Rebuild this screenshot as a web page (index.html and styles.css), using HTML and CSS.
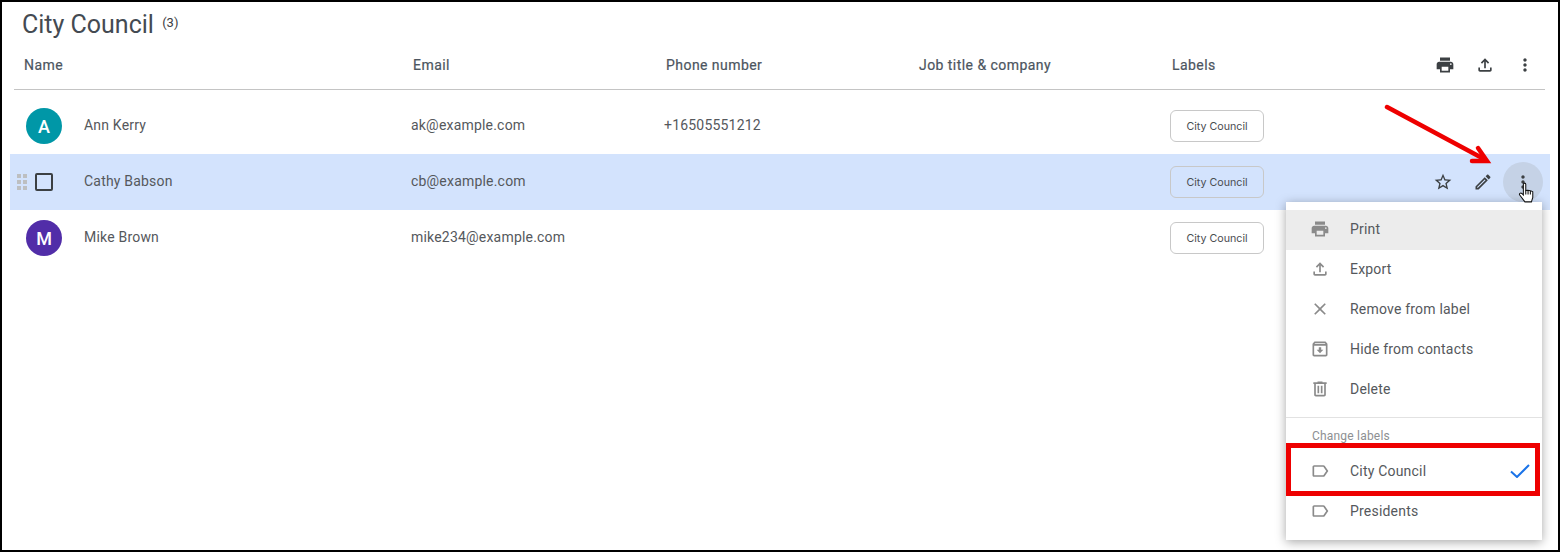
FILE: index.html
```html
<!DOCTYPE html>
<html lang="en">
<head>
<meta charset="utf-8">
<title>City Council</title>
<link rel="stylesheet" href="styles.css">
</head>
<body>
<svg class="defs" width="0" height="0" aria-hidden="true">
  <symbol id="i-print" viewBox="0 0 24 24"><path d="M19 8H5c-1.66 0-3 1.34-3 3v6h4v4h12v-4h4v-6c0-1.66-1.34-3-3-3zm-3 11H8v-5h8v5zm3-7c-.55 0-1-.45-1-1s.45-1 1-1 1 .45 1 1-.45 1-1 1zm-1-9H6v4h12V3z"/></symbol>
  <symbol id="i-export" viewBox="0 0 24 24"><path d="M18 15v3H6v-3H4v3c0 1.1.9 2 2 2h12c1.1 0 2-.9 2-2v-3h-2zM7 9l1.41 1.41L11 7.83V16h2V7.83l2.59 2.58L17 9l-5-5-5 5z"/></symbol>
  <symbol id="i-more" viewBox="0 0 24 24"><path d="M12 8c1.1 0 2-.9 2-2s-.9-2-2-2-2 .9-2 2 .9 2 2 2zm0 2c-1.1 0-2 .9-2 2s.9 2 2 2 2-.9 2-2-.9-2-2-2zm0 6c-1.1 0-2 .9-2 2s.9 2 2 2 2-.9 2-2-.9-2-2-2z"/></symbol>
  <symbol id="i-star" viewBox="0 0 24 24"><path d="M22 9.24l-7.19-.62L12 2 9.19 8.63 2 9.24l5.46 4.73L5.82 21 12 17.27 18.18 21l-1.63-7.03L22 9.24zM12 15.4l-3.76 2.27 1-4.28-3.32-2.88 4.38-.38L12 6.1l1.71 4.04 4.38.38-3.32 2.88 1 4.28L12 15.4z"/></symbol>
  <symbol id="i-edit" viewBox="0 0 24 24"><path d="M3 17.25V21h3.75L17.81 9.94l-3.75-3.75L3 17.25zM5.92 19H5v-.92l9.06-9.06.92.92L5.92 19zM20.71 5.630l-2.34-2.34c-.2-.2-.45-.29-.71-.29s-.51.1-.7.29l-1.83 1.83 3.75 3.75 1.83-1.83c.39-.39.39-1.02 0-1.41z"/></symbol>
  <symbol id="i-close" viewBox="0 0 24 24"><path d="M19 6.41L17.59 5 12 10.59 6.41 5 5 6.41 10.59 12 5 17.59 6.41 19 12 13.41 17.59 19 19 17.59 13.41 12z"/></symbol>
  <symbol id="i-hide" viewBox="0 0 24 24"><path d="M20.54 5.23l-1.39-1.68C18.88 3.21 18.47 3 18 3H6c-.47 0-.88.21-1.16.55L3.46 5.23C3.17 5.57 3 6.02 3 6.5V19c0 1.1.9 2 2 2h14c1.1 0 2-.9 2-2V6.5c0-.48-.17-.93-.46-1.27zM6.24 5h11.52l.83 1H5.42l.82-1zM5 19V8h14v11H5zm8.45-9h-2.9v3H8l4 4 4-4h-2.55z"/></symbol>
  <symbol id="i-delete" viewBox="0 0 24 24"><path d="M15 4V3H9v1H4v2h1v13c0 1.1.9 2 2 2h10c1.1 0 2-.9 2-2V6h1V4h-5zm2 15H7V6h10v13zM9 8h2v9H9zm4 0h2v9h-2z"/></symbol>
  <symbol id="i-label" viewBox="0 0 24 24"><path d="M17.63 5.84C17.27 5.33 16.67 5 16 5L5 5.01C3.9 5.01 3 5.9 3 7v10c0 1.1.9 1.99 2 1.99L16 19c.67 0 1.27-.33 1.63-.84L22 12l-4.37-6.16zM16 17H5V7h11l3.55 5L16 17z"/></symbol>
</svg>

<div class="frame">
  <h1 class="title">City Council <span class="count">(3)</span></h1>

  <div class="head">
    <span>Name</span>
    <span>Email</span>
    <span>Phone number</span>
    <span>Job title &amp; company</span>
    <span>Labels</span>
    <span class="head-actions">
      <svg class="ic dark"><use href="#i-print"/></svg>
      <svg class="ic dark"><use href="#i-export"/></svg>
      <svg class="ic dark"><use href="#i-more"/></svg>
    </span>
  </div>

  <div class="rows">
    <div class="row">
      <span class="lead"><span class="avatar teal">A</span></span>
      <span>Ann Kerry</span>
      <span>ak@example.com</span>
      <span class="phone">+16505551212</span>
      <span class="chip">City Council</span>
    </div>
    <div class="row active">
      <span class="lead">
        <span class="grip"><i></i><i></i><i></i><i></i><i></i><i></i></span>
        <span class="check"></span>
      </span>
      <span>Cathy Babson</span>
      <span>cb@example.com</span>
      <span></span>
      <span class="chip">City Council</span>
      <span class="row-actions">
        <span class="act"><svg class="ic dark"><use href="#i-star"/></svg></span>
        <span class="act"><svg class="ic dark"><use href="#i-edit"/></svg></span>
        <span class="act on"><svg class="ic dark"><use href="#i-more"/></svg></span>
      </span>
    </div>
    <div class="row">
      <span class="lead"><span class="avatar purple">M</span></span>
      <span>Mike Brown</span>
      <span>mike234@example.com</span>
      <span></span>
      <span class="chip">City Council</span>
    </div>
  </div>

  <div class="menu">
    <div class="item hl"><svg class="ic"><use href="#i-print"/></svg>Print</div>
    <div class="item"><svg class="ic"><use href="#i-export"/></svg>Export</div>
    <div class="item"><svg class="ic"><use href="#i-close"/></svg>Remove from label</div>
    <div class="item"><svg class="ic"><use href="#i-hide"/></svg>Hide from contacts</div>
    <div class="item"><svg class="ic"><use href="#i-delete"/></svg>Delete</div>
    <div class="rule"></div>
    <div class="menu-head">Change labels</div>
    <div class="item"><svg class="ic"><use href="#i-label"/></svg>City Council
      <svg class="tick" viewBox="0 0 20 14"><path d="M1 7.5l6 5.5L19 1"/></svg>
    </div>
    <div class="item"><svg class="ic"><use href="#i-label"/></svg>Presidents</div>
  </div>

  <div class="redbox"></div>

  <svg class="arrow" viewBox="0 0 120 72">
    <path d="M3 4L100 56"/>
    <path d="M88 58L103 58L94 45"/>
  </svg>

  <svg class="hand" viewBox="0 0 16 22">
    <path d="M5 2.200c0-1.500 2.300-1.500 2.300 0v6l1.500-.3 1.800.2 1.800.4 1.600.8v5.500l-1.300 4.200H6.500L1.500 12.500c-.8-1.300.8-2.500 2-1.500L5 12.500z"/>
    <path d="M7.300 8v4M9.500 8v4M11.700 8.500V12"/>
  </svg>
</div>
</body>
</html>
```
FILE: styles.css
```css
* { box-sizing: border-box; }
html, body { margin: 0; padding: 0; background: #fff; }
body { font-family: Roboto, "Liberation Sans", sans-serif; overflow: hidden; }
.defs { position: absolute; }

.frame {
  position: relative;
  width: 1560px;
  height: 552px;
  border: 2px solid #000;
  padding: 3px 8px 0;
  color: #4a4c50;
  overflow: hidden;
}

.title {
  margin: 0 0 0 12px;
  height: 36px;
  line-height: 35px;
  font-size: 25px;
  font-weight: 400;
  color: #444a52;
}
.count { font-size: 13px; margin-left: 2px; vertical-align: 6px; color: #3c4043; }

.head {
  display: grid;
  grid-template-columns: 389px 253px 253px 253px 1fr auto;
  align-items: center;
  height: 49px;
  margin: 0 5px 0 4px;
  padding: 0 0 0 10px;
  border-bottom: 1px solid #c4c4c4;
  font-size: 14px;
  letter-spacing: .45px;
  color: #4c5560;
}
.head > span { -webkit-text-stroke: .2px #4c5560; }
.head > .head-actions {
  display: flex;
  gap: 20px;
  padding-right: 10px;
  -webkit-text-stroke: 0;
}

.ic { width: 20px; height: 20px; fill: #8a8a8a; flex: none; display: block; }
.ic.dark { fill: #3c4043; }

.rows { margin-top: 8px; }
.row {
  display: grid;
  grid-template-columns: 74px 327px 252px 507px 253px 1fr;
  align-items: center;
  height: 56px;
  padding-bottom: 2px;
  font-size: 14px;
  letter-spacing: .2px;
  color: #55585c;
}
.row.active { background: #d3e3fd; }
.phone { margin-left: 1px; }
.lead { display: flex; align-items: center; height: 36px; margin-top: 2px; }
.avatar {
  width: 36px;
  height: 36px;
  margin-left: 16px;
  border-radius: 50%;
  color: #fff;
  font-size: 18px;
  font-weight: 500;
  letter-spacing: 0;
  display: flex;
  align-items: center;
  justify-content: center;
}
.teal { background: #0097a7; }
.purple { background: #512da8; }

.grip {
  display: grid;
  grid-template-columns: 4px 4px;
  grid-auto-rows: 4px;
  gap: 2px 2px;
  margin-left: 7px;
}
.grip i { background: #bdbfc1; display: block; }
.check {
  width: 18px;
  height: 18px;
  margin-left: 8px;
  border: 2px solid #3c4043;
  border-radius: 2px;
}

.chip {
  width: 94px;
  height: 32px;
  margin-top: 2px;
  border: 1px solid #c8c8c8;
  border-radius: 6px;
  font-family: Inter, "Liberation Sans", sans-serif;
  font-size: 10.700px;
  letter-spacing: 0;
  color: #4a4c50;
  display: flex;
  align-items: center;
  justify-content: center;
}

.row-actions { display: flex; justify-content: flex-end; padding-right: 7px; margin-top: 2px; }
.act {
  width: 40px;
  height: 40px;
  border-radius: 50%;
  display: flex;
  align-items: center;
  justify-content: center;
}
.act.on { background: #c5d2e6; }

.menu {
  position: absolute;
  left: 1284px;
  top: 200px;
  width: 256px;
  padding: 8px 0;
  background: #fff;
  box-shadow: 0 2px 10px rgba(0, 0, 0, .35);
  font-size: 14px;
  letter-spacing: .2px;
  color: #55585c;
}
.item {
  display: flex;
  align-items: center;
  gap: 20px;
  height: 40px;
  padding: 0 12px 2px 24px;
}
.item.hl { background: #ececec; }
.rule { height: 1px; margin-top: 7px; background: #e2e2e2; }
.menu-head {
  height: 34px;
  padding: 9px 0 0 26px;
  line-height: 18px;
  font-size: 12px;
  letter-spacing: .2px;
  color: #8d8f92;
}
.tick {
  width: 20px;
  height: 14px;
  margin-left: auto;
  fill: none;
  stroke: #1a73e8;
  stroke-width: 2;
}

.redbox {
  position: absolute;
  left: 1284px;
  top: 441px;
  width: 254px;
  height: 53px;
  border: 5px solid #ee0000;
}
.arrow {
  position: absolute;
  left: 1382px;
  top: 101px;
  width: 120px;
  height: 72px;
  fill: none;
  stroke: #ee0000;
  stroke-width: 4.500;
  stroke-linecap: round;
}
.hand {
  position: absolute;
  left: 1516px;
  top: 180px;
  width: 17px;
  height: 23px;
  fill: #fff;
  stroke: #111;
  stroke-width: 1;
}
```
